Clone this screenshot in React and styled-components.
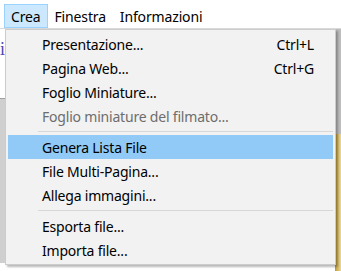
import React from 'react';
import styled, { createGlobalStyle } from 'styled-components';

const GlobalStyle = createGlobalStyle`
  html, body {
    margin: 0;
    padding: 0;
    background: #ffffff;
    font-family: "Noto Sans", "Open Sans", sans-serif;
  }
`;

const Window = styled.div`
  position: relative;
  width: 341px;
  height: 271px;
  overflow: hidden;
  background: #ffffff;
`;

const MenuBar = styled.div`
  display: flex;
  align-items: flex-end;
  height: 29px;
  padding-left: 4px;
  box-sizing: border-box;
  border-bottom: 1px solid #d9d9d9;
`;

const BarItem = styled.div`
  height: 24px;
  padding: 0 6px;
  display: flex;
  align-items: center;
  font-size: 14px;
  letter-spacing: -0.15px;
  color: #000;
  box-sizing: border-box;
  border: 1px solid ${({ open }) => (open ? '#99d1ff' : 'transparent')};
  background: ${({ open }) => (open ? '#cce8ff' : 'transparent')};
`;

const Backdrop = styled.div`
  display: grid;
  grid-template-columns: 1fr 6px;
  height: 242px;
`;

const DocArea = styled.div`
  display: flex;
  flex-direction: column;
`;

const DocTop = styled.div`
  height: 70px;
  background: #ffffff;
  border-bottom: 1px solid #a0a0a0;
  color: #4a4ab0;
  font-size: 18px;
  font-family: "Liberation Serif", serif;
  padding-top: 10px;
  box-sizing: border-box;
`;

const DocBody = styled.div`
  flex: 1;
  background: #cfcfcf;
  border-bottom: 8px solid #ffffff;
`;

const SideBar = styled.div`
  display: flex;
  flex-direction: column;
  background: #bdbdbd;
  border-left: 1px solid #9a9a9a;
`;

const SideGold = styled.div`
  margin-top: 105px;
  flex: 1;
  background: linear-gradient(90deg, #c9a640, #e8d9a0);
`;

const Popup = styled.div`
  position: absolute;
  left: 5px;
  top: 29px;
  width: 331px;
  padding: 2px;
  box-sizing: border-box;
  background: #f2f2f2;
  border: 1px solid #cccccc;
  box-shadow: 2px 2px 2px rgba(0, 0, 0, 0.28);
  font-size: 14px;
  letter-spacing: -0.2px;
`;

const Item = styled.div`
  display: flex;
  align-items: center;
  justify-content: space-between;
  height: 24px;
  padding: 0 19px 0 34px;
  color: ${({ disabled }) => (disabled ? '#6d6d6d' : '#000000')};
  background: ${({ active }) => (active ? '#91c9f7' : 'transparent')};
`;

const Separator = styled.div`
  height: 7px;
  display: flex;
  align-items: center;
  padding-left: 30px;
  &::after {
    content: '';
    flex: 1;
    height: 1px;
    background: #d7d7d7;
  }
`;

const groups = [
  [
    { label: 'Presentazione...', key: 'Ctrl+L' },
    { label: 'Pagina Web...', key: 'Ctrl+G' },
    { label: 'Foglio Miniature...' },
    { label: 'Foglio miniature del filmato...', disabled: true },
  ],
  [
    { label: 'Genera Lista File', active: true },
    { label: 'File Multi-Pagina...' },
    { label: 'Allega immagini...' },
  ],
  [{ label: 'Esporta file...' }, { label: 'Importa file...' }],
];

export default function App() {
  return (
    <Window>
      <GlobalStyle />
      <MenuBar>
        <BarItem open>Crea</BarItem>
        <BarItem>Finestra</BarItem>
        <BarItem>Informazioni</BarItem>
      </MenuBar>
      <Backdrop>
        <DocArea>
          <DocTop>i</DocTop>
          <DocBody />
        </DocArea>
        <SideBar>
          <SideGold />
        </SideBar>
      </Backdrop>
      <Popup>
        {groups.map((g, gi) => (
          <React.Fragment key={gi}>
            {gi > 0 && <Separator />}
            {g.map((it) => (
              <Item key={it.label} disabled={it.disabled} active={it.active}>
                <span>{it.label}</span>
                {it.key && <span>{it.key}</span>}
              </Item>
            ))}
          </React.Fragment>
        ))}
      </Popup>
    </Window>
  );
}
